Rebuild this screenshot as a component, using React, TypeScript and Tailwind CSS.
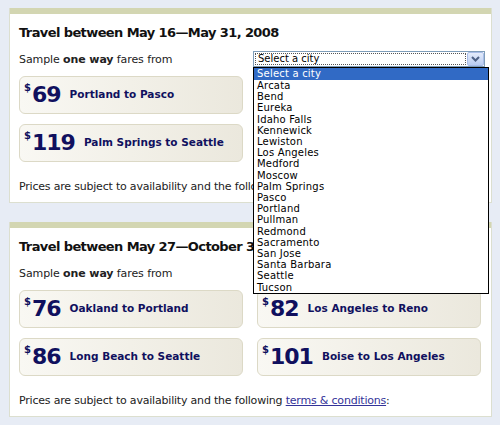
import React from "react";

const cities = [
  "Arcata","Bend","Eureka","Idaho Falls","Kennewick","Lewiston","Los Angeles","Medford","Moscow","Palm Springs","Pasco","Portland","Pullman","Redmond","Sacramento","San Jose","Santa Barbara","Seattle","Tucson",
];

function Fare({ price, route }: { price: string; route: string }) {
  return (
    <div className="h-[38px] rounded-[6px] border border-[#dcd9c6] bg-gradient-to-r from-[#f9f8f3] to-[#ebe8dd] flex items-center pl-[4px]">
      <span className="self-start mt-[6px] text-[10px] font-bold text-[#10105e] leading-none">$</span>
      <span className="text-[22px] font-bold text-[#10105e] leading-none tracking-[-1px] ml-[1px]">{price}</span>
      <span className="ml-[9px] text-[10.5px] font-bold text-[#10105e]">{route}</span>
    </div>
  );
}

function Panel({ title, children, footer }: { title: string; children: React.ReactNode; footer: React.ReactNode }) {
  return (
    <div className="w-[483px] bg-white border-x border-b border-[#dcdfcf]">
      <div className="h-[6px] bg-[#d3d6b2]" />
      <div className="pl-[9px] pr-[11px] pt-[11px] pb-[8px]">
        <div className="text-[13px] font-bold text-[#111] leading-[16px] tracking-[-0.6px]">{title}</div>
        <div className="mt-[12px] text-[11px] text-[#222] leading-[14px] tracking-[-0.1px]">
          Sample <b>one way</b> fares from
        </div>
        <div className="mt-[9px]">{children}</div>
        <div className="mt-[18px] text-[11px] text-[#222] leading-[14px] tracking-[-0.2px]">{footer}</div>
      </div>
    </div>
  );
}

export default function App() {
  return (
    <div className="relative w-[500px] h-[425px] bg-[#e7ecf5] pt-[8px] pl-[9px]" style={{ fontFamily: '"DejaVu Sans", Verdana, sans-serif' }}>
      <Panel
        title="Travel between May 16—May 31, 2008"
        footer={<>Prices are subject to availability and the following terms &amp; conditions:</>}
      >
        <div className="w-[224px] flex flex-col gap-[10px]">
          <Fare price="69" route="Portland to Pasco" />
          <Fare price="119" route="Palm Springs to Seattle" />
        </div>
      </Panel>
      <div className="h-[19px]" />
      <Panel
        title="Travel between May 27—October 31, 2008"
        footer={
          <>
            Prices are subject to availability and the following{" "}
            <span className="underline text-[#333399]">terms &amp; conditions</span>:
          </>
        }
      >
        <div className="grid grid-cols-[224px_224px] gap-x-[14px] gap-y-[10px]">
          <Fare price="76" route="Oakland to Portland" />
          <Fare price="82" route="Los Angeles to Reno" />
          <Fare price="86" route="Long Beach to Seattle" />
          <Fare price="101" route="Boise to Los Angeles" />
        </div>
      </Panel>

      {/* select box */}
      <div className="absolute left-[253px] top-[51px] w-[232px] h-[16px] border border-[#7f9db9] bg-white flex items-center">
        <div className="flex-1 h-[12px] mx-[1px] border border-dotted border-[#555] flex items-center pl-[2px] text-[10px] leading-none text-black">
          Select a city
        </div>
        <div className="w-[17px] h-[14px] bg-gradient-to-b from-[#e4ecfb] to-[#b9ccf2] border border-[#a9bde8] rounded-[2px] flex items-center justify-center">
          <svg width="9" height="6" viewBox="0 0 9 6">
            <path d="M1 1 L4.5 4.5 L8 1" stroke="#4d6185" strokeWidth="2" fill="none" />
          </svg>
        </div>
      </div>

      {/* dropdown list */}
      <div className="absolute left-[253px] top-[67px] w-[236px] h-[227px] border border-black bg-white text-[10px] leading-[11.2px] text-black tracking-[0.2px]">
        <div className="bg-[#316ac5] text-white pl-[3px] h-[12px] leading-[12px]">Select a city</div>
        {cities.map((c) => (
          <div key={c} className="pl-[3px]">{c}</div>
        ))}
      </div>
    </div>
  );
}
